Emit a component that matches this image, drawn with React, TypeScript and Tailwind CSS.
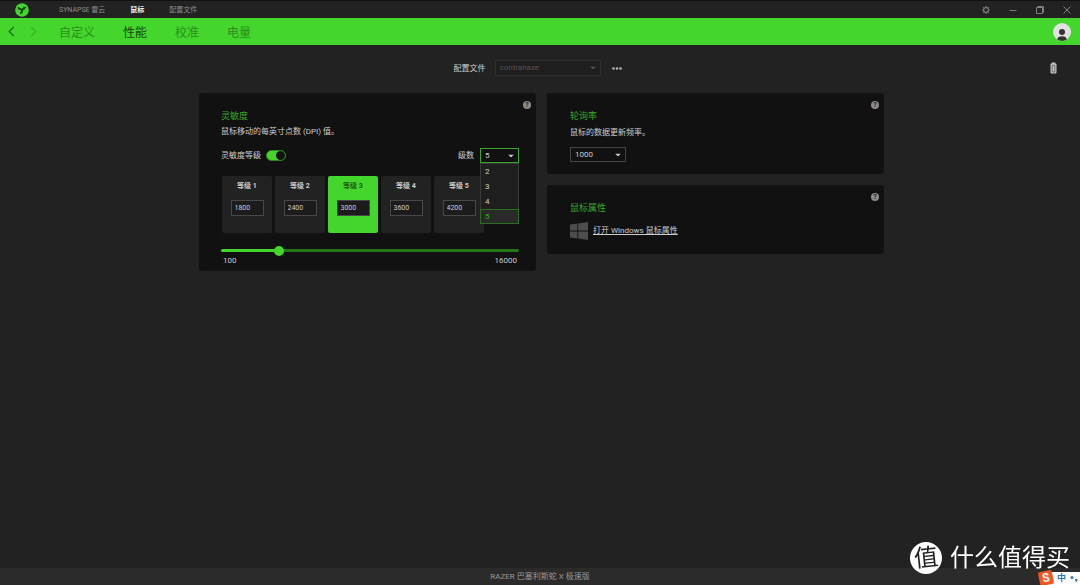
import React, { useState } from 'react';

const levels = [1800, 2400, 3000, 3600, 4200];
const stageOptions = [2, 3, 4, 5];
const DPI_MIN = 100;
const DPI_MAX = 16000;

const Caret: React.FC<{ className?: string }> = ({ className = '' }) => (
  <svg viewBox="0 0 6 3" aria-hidden="true" className={`pointer-events-none absolute right-[5px] top-1/2 h-[3px] w-[6px] -translate-y-1/2 ${className}`}>
    <path d="M0 0h6L3 3z" fill="currentColor" />
  </svg>
);

const HelpButton: React.FC<{ label: string }> = ({ label }) => (
  <button
    type="button"
    aria-label={label}
    className="absolute right-[5px] top-2 flex h-[8px] w-[8px] items-center justify-center rounded-full bg-[#8c8c8c] text-[7px] leading-none font-bold text-[#222]"
  >
    ?
  </button>
);

interface CardProps {
  title: string;
  className?: string;
  children: React.ReactNode;
}

const Card: React.FC<CardProps> = ({ title, className = '', children }) => (
  <section className={`relative rounded-[3px] bg-[#111] pt-[17px] ${className}`}>
    <HelpButton label={`${title} ?`} />
    <h2 className="text-[9px] leading-[12px] text-[#37a826]">{title}</h2>
    {children}
  </section>
);

const TitleBar: React.FC = () => (
  <header className="flex h-[18px] items-center border-t border-[#111] bg-[#222] pl-[15px] text-[7px] text-[#8a8a8a]">
    <svg viewBox="0 0 28 28" className="h-[14px] w-[14px]">
      <circle cx="14" cy="14" r="13.6" fill="#44d62c" />
      <g fill="none" stroke="#123c0c" strokeLinecap="round" strokeLinejoin="round">
        <path strokeWidth="2.6" d="M14.500 13.500C11.500 13.500 9 12.500 6.500 9.500M14.500 13.500c1-2.500 3-4.300 6.500-4.500M14.500 13.500c.5 3-.5 5.500-3 7.500" />
        <path strokeWidth="1.500" d="M18 8l1.500 5M6 12l4.500-1M15 19l-4.500-1" />
        <circle cx="14.500" cy="13.500" r="1.800" fill="#123c0c" />
      </g>
    </svg>
    <nav className="ml-[30px] flex items-center gap-[25px] pt-px">
      <a href="#synapse">SYNAPSE 雷云</a>
      <a href="#mouse" className="font-bold text-[#eee]">鼠标</a>
      <a href="#profiles">配置文件</a>
    </nav>
    <div className="ml-auto flex items-center">
      <button type="button" aria-label="Settings" className="flex w-[27px] justify-center">
        <svg viewBox="0 0 16 16" className="h-[8px] w-[8px]" fill="none" stroke="#8a8a8a">
          <circle cx="8" cy="8" r="4.800" strokeWidth="2" />
          <path
            strokeWidth="2.400"
            d="M8 .5v3M8 12.500v3M.5 8h3M12.500 8h3M2.700 2.700l2 2M11.300 11.300l2 2M2.700 13.300l2-2M11.300 4.700l2-2"
          />
        </svg>
      </button>
      <button type="button" aria-label="Minimize" className="flex w-[27px] justify-center">
        <svg viewBox="0 0 8 8" className="h-[8px] w-[8px]" stroke="#777">
          <path d="M.5 4.500h7" />
        </svg>
      </button>
      <button type="button" aria-label="Restore" className="flex w-[27px] justify-center">
        <svg viewBox="0 0 8 8" className="h-[8px] w-[8px]" fill="none" stroke="#808080">
          <path d="M.5 1.500h6v6h-6zM1.500 .5h6v6" />
        </svg>
      </button>
      <button type="button" aria-label="Close" className="flex w-[27px] justify-center">
        <svg viewBox="0 0 8 8" className="h-[8px] w-[8px]" stroke="#8a8a8a" strokeWidth="0.900">
          <path d="M.5.5l7 7M7.500.5l-7 7" />
        </svg>
      </button>
    </div>
  </header>
);

const NavBar: React.FC = () => (
  <div className="flex h-[27px] items-center bg-[#44d62c] pr-[9px] pl-2">
    <button type="button" aria-label="Back">
      <svg viewBox="0 0 7 12" className="h-[11px] w-[7px]" fill="none" stroke="#1b5a12" strokeWidth="1.200">
        <path d="M6 1L1 6l5 5" />
      </svg>
    </button>
    <button type="button" aria-label="Forward" className="ml-[15px]">
      <svg viewBox="0 0 7 12" className="h-[11px] w-[7px]" fill="none" stroke="#38a528" strokeWidth="1.100">
        <path d="M1 1l5 5-5 5" />
      </svg>
    </button>
    <nav className="ml-[22px] flex gap-[28px] pt-[2px] text-[12px] leading-[16px] text-[#2b8f1d]">
      <a href="#customize">自定义</a>
      <a href="#performance" className="text-[#164a0e]">性能</a>
      <a href="#calibration">校准</a>
      <a href="#power">电量</a>
    </nav>
    <button type="button" aria-label="Account" className="ml-auto">
      <svg viewBox="0 0 18 18" className="h-[18px] w-[18px]">
        <circle cx="9" cy="9" r="9" fill="#e2e2e2" />
        <circle cx="9" cy="9" r="3" fill="#333" />
        <path d="M4.300 16.600c0-2.500 2-3.300 4.700-3.300s4.700.8 4.700 3.300A9 9 0 0 1 9 18a9 9 0 0 1-4.700-1.400z" fill="#333" />
      </svg>
    </button>
  </div>
);

const ProfileRow: React.FC = () => (
  <div className="grid grid-cols-[1fr_auto_1fr] items-center pt-[15px]">
    <div className="col-start-2 flex items-center">
      <label htmlFor="profile" className="pt-px text-[8px] text-[#ccc]">配置文件</label>
      <div className="relative ml-[9px] text-[#555]">
        <select id="profile" className="block h-[16px] w-[106px] appearance-none border border-[#303030] bg-[#1e1e1e] pl-1 text-[8px] leading-[14px] outline-none">
          <option>contrahaze</option>
        </select>
        <Caret />
      </div>
      <button type="button" aria-label="More" className="ml-[6px] flex w-5 justify-center">
        <svg viewBox="0 0 10 3" className="h-[3px] w-[10px]" fill="#b5b5b5">
          <circle cx="1.500" cy="1.500" r="1.300" />
          <circle cx="5" cy="1.500" r="1.300" />
          <circle cx="8.500" cy="1.500" r="1.300" />
        </svg>
      </button>
    </div>
    <svg viewBox="0 0 7 12" className="mr-[23px] h-[12px] w-[7px] justify-self-end">
      <path d="M1.800.5h3.400v1h.4a.9.900 0 0 1 .9.900v8.200a.9.900 0 0 1-.9.900H1.400a.9.900 0 0 1-.9-.9V2.400a.9.900 0 0 1 .9-.9h.4z" fill="#c4c4c4" />
      <path d="M2.200 3.300v6.700h2.600V3.300z" fill="none" stroke="#555" strokeWidth=".8" />
    </svg>
  </div>
);

const SensitivityCard: React.FC = () => {
  const [active, setActive] = useState(2);
  const [dpi, setDpi] = useState(3000);
  const [stages, setStages] = useState(5);
  const [enabled, setEnabled] = useState(true);
  const fill = ((dpi - DPI_MIN) / (DPI_MAX - DPI_MIN)) * 100;

  return (
    <Card title="灵敏度" className="pr-[17px] pb-1 pl-[22px]">
      <p className="mt-1 text-[8px] leading-[12px] text-[#ccc]">鼠标移动的每英寸点数 (DPI) 值。</p>

      <div className="mt-[10px] flex h-[15px] items-center text-[8px] text-[#ccc]">
        <label htmlFor="stages-on">灵敏度等级</label>
        <input
          id="stages-on"
          type="checkbox"
          role="switch"
          checked={enabled}
          onChange={(e) => setEnabled(e.target.checked)}
          className="ml-[5px] flex h-[11px] w-[20px] appearance-none items-center justify-end rounded-full border border-[#2d861f] bg-[#44d62c] before:h-[9px] before:w-[9px] before:rounded-full before:bg-[#111] before:content-['']"
        />
        <label htmlFor="stage-count" className="ml-auto">级数</label>
        <div className="relative ml-[6px]">
          <select
            id="stage-count"
            value={stages}
            onChange={(e) => setStages(Number(e.target.value))}
            className="block h-[15px] w-[39px] appearance-none border border-[#37a826] bg-[#111] pl-1 text-[8px] leading-[13px] outline-none"
          >
            {stageOptions.map((n) => (
              <option key={n}>{n}</option>
            ))}
          </select>
          <Caret />
          <ul role="listbox" aria-label="级数" className="absolute top-full left-0 z-10 w-full border border-[#383838] border-b-0 bg-[#1e1e1e] text-[8px] leading-[15px]">
            {stageOptions.map((n) => (
              <li
                key={n}
                role="option"
                aria-selected={n === stages}
                onClick={() => setStages(n)}
                className={n === stages ? '-mx-px h-[15px] border border-[#2a6f20] bg-[#2a2a2a] pl-1 leading-[13px] text-[#37a826]' : 'pl-1'}
              >
                {n}
              </li>
            ))}
          </ul>
        </div>
      </div>

      <div className="mt-[13px] flex gap-[3px] pl-px">
        {levels.map((value, i) => (
          <div
            key={value}
            onClick={() => setActive(i)}
            className={`flex h-[57px] w-[50px] flex-col items-center rounded-[2px] pt-[5px] ${i === active ? 'bg-[#44d62c] text-[#1c5a12]' : 'bg-[#222] text-[#ccc]'}`}
          >
            <label htmlFor={`level-${i}`} className="text-[7px] leading-[10px] font-bold">等级 {i + 1}</label>
            <input
              id={`level-${i}`}
              type="text"
              defaultValue={value}
              className="mt-[9px] h-[16px] w-[33px] border border-[#484848] bg-[#1c1c1c] px-[3px] text-[7px] text-[#ccc] outline-none"
            />
          </div>
        ))}
      </div>

      <input
        type="range"
        aria-label="DPI"
        min={DPI_MIN}
        max={DPI_MAX}
        step={50}
        value={dpi}
        onChange={(e) => setDpi(Number(e.target.value))}
        className="mt-[12px] block h-[10px] w-full appearance-none bg-transparent [&::-webkit-slider-runnable-track]:h-[3px] [&::-webkit-slider-runnable-track]:rounded-full [&::-webkit-slider-runnable-track]:bg-[image:var(--track)] [&::-webkit-slider-thumb]:-mt-[3px] [&::-webkit-slider-thumb]:h-[10px] [&::-webkit-slider-thumb]:w-[10px] [&::-webkit-slider-thumb]:appearance-none [&::-webkit-slider-thumb]:rounded-full [&::-webkit-slider-thumb]:bg-[#44d62c]"
        style={{ '--track': `linear-gradient(to right, #44d62c ${fill}%, #257518 ${fill}%)` } as React.CSSProperties}
      />
      <div className="flex justify-between px-[2px] text-[8px] leading-[12px] text-[#ccc]">
        <span>{DPI_MIN}</span>
        <span>{DPI_MAX}</span>
      </div>
    </Card>
  );
};

const PollingCard: React.FC = () => (
  <Card title="轮询率" className="px-[23px] pb-3">
    <label htmlFor="polling" className="mt-[5px] block text-[8px] leading-[12px] text-[#ccc]">鼠标的数据更新频率。</label>
    <div className="relative mt-2 w-[56px] text-[#ccc]">
      <select id="polling" defaultValue="1000" className="block h-[15px] w-full appearance-none border border-[#444] bg-[#111] pl-1 text-[8px] leading-[13px] outline-none">
        <option>125</option>
        <option>500</option>
        <option>1000</option>
      </select>
      <Caret />
    </div>
  </Card>
);

const MousePropertiesCard: React.FC = () => (
  <Card title="鼠标属性" className="px-[23px] pb-[14px]">
    <div className="mt-2 flex items-center gap-[5px]">
      <svg viewBox="0 0 18 18" className="h-[18px] w-[18px]" fill="#4d4d4d">
        <path d="M0 2.600l7.400-1v7H0zM8.200 1.500L18 0v8.600H8.200zM0 9.400h7.400v7L0 15.400zM8.200 9.400H18V18l-9.800-1.500z" />
      </svg>
      <a href="#windows" className="text-[8px] leading-[12px] text-[#ccc] underline">打开 Windows 鼠标属性</a>
    </div>
  </Card>
);

const Watermark: React.FC = () => (
  <div className="pointer-events-none fixed right-0 bottom-0 h-[43px] w-[172px] text-white">
    <div className="flex items-center gap-[8px] pl-[2px]">
      <span className="flex h-[32px] w-[32px] items-center justify-center rounded-full bg-white text-[#222]">
        <span className="-rotate-6 text-[24px] leading-[24px]">值</span>
      </span>
      <span className="text-[24px] leading-[24px] whitespace-nowrap">什么值得买</span>
    </div>
    <div className="absolute right-0 bottom-0 flex h-[13px] w-[34px] items-center justify-end gap-1 bg-white pr-[2px] text-[9px] leading-[13px] font-bold text-[#2b78c5]">
      <span>中</span>
      <svg viewBox="0 0 8 8" className="h-[8px] w-[8px]" fill="#2b78c5">
        <circle cx="2" cy="2.500" r="1.500" />
        <path d="M5 4h2.400c.3 1.800-.5 3-2 3.600.5-.8.6-1.200.4-1.900H5z" />
      </svg>
      <span className="absolute bottom-0 -left-[7px] flex h-[14px] w-[14px] -rotate-12 items-center justify-center rounded-[2px] bg-[#ee5520] text-[12px] leading-[12px] font-bold text-white">S</span>
    </div>
  </div>
);

const App: React.FC = () => (
  <div className="flex min-h-screen flex-col bg-[#222] font-['Roboto','Noto_Sans_CJK_SC',sans-serif]">
    <TitleBar />
    <NavBar />
    <main className="flex-1">
      <ProfileRow />
      <div className="pt-[17px] pl-[3px]">
        <div className="mx-auto grid max-w-[685px] grid-cols-2 items-start gap-[11px]">
          <SensitivityCard />
          <div className="flex flex-col gap-[11px]">
            <PollingCard />
            <MousePropertiesCard />
          </div>
        </div>
      </div>
    </main>
    <footer className="h-[17px] bg-[#2b2b2b] text-center text-[8px] leading-[17px] text-[#999]">RAZER 巴塞利斯蛇 X 极速版</footer>
    <Watermark />
  </div>
);

export default App;
